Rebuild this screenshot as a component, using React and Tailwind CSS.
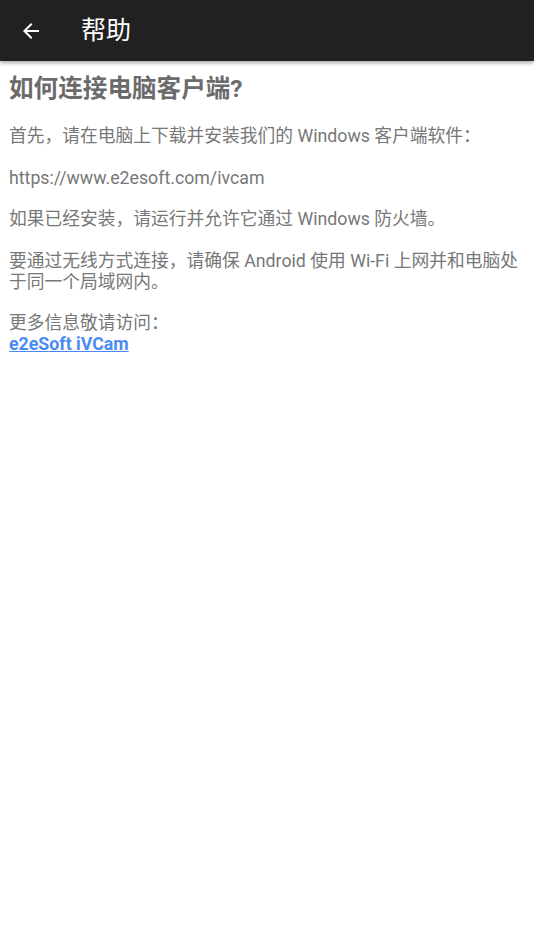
export default function App() {
  const font = { fontFamily: 'Roboto, "Noto Sans CJK SC", sans-serif' };
  return (
    <div className="w-[534px] min-h-[950px] bg-white" style={font}>
      <div className="h-[61px] bg-[#212121] flex items-center shadow-[0_2px_4px_rgba(0,0,0,0.35)] relative z-10">
        <svg className="ml-[19px] w-[24px] h-[24px]" viewBox="0 0 24 24" fill="#ffffff">
          <path d="M20 11H7.83l5.59-5.59L12 4l-8 8 8 8 1.41-1.41L7.83 13H20v-2z" />
        </svg>
        <div className="ml-[38px] text-white text-[25px] leading-none">帮助</div>
      </div>
      <div className="px-[9px] pt-[13px]">
        <div className="text-[24.6px] font-bold text-[#6b6b6b] leading-[29px]">如何连接电脑客户端?</div>
        <div className="mt-[23px] text-[17.75px] leading-[20.8px] text-[#777777]">
          <div>首先，请在电脑上下载并安装我们的 Windows 客户端软件：</div>
          <div className="h-[20.8px]" />
          <div>https://www.e2esoft.com/ivcam</div>
          <div className="h-[20.8px]" />
          <div>如果已经安装，请运行并允许它通过 Windows 防火墙。</div>
          <div className="h-[20.8px]" />
          <div>要通过无线方式连接，请确保 Android 使用 Wi-Fi 上网并和电脑处于同一个局域网内。</div>
          <div className="h-[20.8px]" />
          <div>更多信息敬请访问：</div>
          <div>
            <a className="text-[#4a8af4] font-bold underline">e2eSoft iVCam</a>
          </div>
        </div>
      </div>
    </div>
  );
}
